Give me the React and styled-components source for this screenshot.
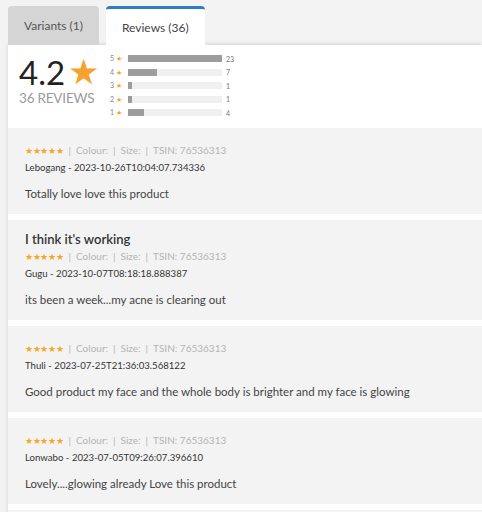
import React from "react"
import styled, { createGlobalStyle } from "styled-components"

const reviews = [
	{
		name: "Lebogang",
		date: "2023-10-26T10:04:07.734336",
		body: "Totally love love this product",
	},
	{
		title: "I think it's working",
		name: "Gugu",
		date: "2023-10-07T08:18:18.888387",
		body: "its been a week...my acne is clearing out",
	},
	{
		name: "Thuli",
		date: "2023-07-25T21:36:03.568122",
		body: "Good product my face and the whole body is brighter and my face is glowing",
	},
	{
		name: "Lonwabo",
		date: "2023-07-05T09:26:07.396610",
		body: "Lovely....glowing already Love this product",
	},
]

const distribution = [
	{ stars: 5, count: 23 },
	{ stars: 4, count: 7 },
	{ stars: 3, count: 1 },
	{ stars: 2, count: 1 },
	{ stars: 1, count: 4 },
]

export default function App() {
	const max = Math.max(...distribution.map((d) => d.count))

	return (
		<>
			<GlobalStyle />
			<Page>
				<Tabs>
					<Tab>Variants (1)</Tab>
					<Tab active>Reviews (36)</Tab>
				</Tabs>
				<Panel>
					<Summary>
						<Score>
							<Average>
								4.2 <BigStar>★</BigStar>
							</Average>
							<Total>36 Reviews</Total>
						</Score>
						<Chart>
							{distribution.map((d) => (
								<ChartRow key={d.stars}>
									<ChartLabel>
										{d.stars} <Orange>★</Orange>
									</ChartLabel>
									<Track>
										<Fill style={{ width: `${(d.count / max) * 100}%` }} />
									</Track>
									<ChartCount>{d.count}</ChartCount>
								</ChartRow>
							))}
						</Chart>
					</Summary>

					{reviews.map((r, i) => (
						<Card key={i}>
							{r.title && <Title>{r.title}</Title>}
							<Meta>
								<Stars>★★★★★</Stars>
								<Sep>|</Sep>Colour:<Sep>|</Sep>Size:<Sep>|</Sep>TSIN: 76536313
							</Meta>
							<Author>
								{r.name} - {r.date}
							</Author>
							<Body>{r.body}</Body>
						</Card>
					))}
					<Card />
				</Panel>
			</Page>
		</>
	)
}

const GlobalStyle = createGlobalStyle`
    html, body {
        margin: 0;
        padding: 0;
        background: #f3f3f3;
        font-family: Lato, "Open Sans", sans-serif;
        overflow: hidden;
    }
`

const Page = styled.div`
    padding-top: 6px;
    min-height: 512px;
`

const Tabs = styled.div`
    display: flex;
    gap: 7px;
    padding-left: 8px;
    position: relative;
    z-index: 2;
`

const Tab = styled.div`
    box-sizing: border-box;
    height: ${(p) => (p.active ? "41px" : "39px")};
    margin-bottom: ${(p) => (p.active ? "-2px" : "0")};
    padding: 0 16px;
    display: flex;
    align-items: center;
    font-size: 12px;
    border-radius: 4px 4px 0 0;
    color: ${(p) => (p.active ? "#444" : "#555")};
    background: ${(p) => (p.active ? "#fff" : "#d5d5d5")};
    border-top: ${(p) => (p.active ? "3px solid #2c7cc6" : "none")};
    padding-bottom: ${(p) => (p.active ? "2px" : "0")};
`

const Panel = styled.div`
    margin-left: 8px;
    background: #fff;
    box-shadow: 0 -1px 4px rgba(0, 0, 0, 0.13);
    position: relative;
    z-index: 1;
`

const Summary = styled.div`
    display: flex;
    align-items: flex-start;
    height: 82px;
    padding: 0 0 0 11px;
    margin-bottom: 1px;
`

const Score = styled.div`
    width: 91px;
    padding-top: 9px;
`

const Average = styled.div`
    font-size: 33px;
    line-height: 36px;
    color: #222;
    display: flex;
    align-items: center;
    gap: 3px;
`

const BigStar = styled.span`
    color: #f7a12e;
    font-size: 35px;
    line-height: 36px;
    font-family: "DejaVu Sans", sans-serif;
`

const Total = styled.div`
    font-size: 13.5px;
    color: #9a9a9a;
    text-transform: uppercase;
    letter-spacing: -0.2px;
`

const Chart = styled.div`
    padding-top: 7px;
    display: flex;
    flex-direction: column;
`

const ChartRow = styled.div`
    display: flex;
    align-items: center;
    height: 13.5px;
`

const ChartLabel = styled.span`
    width: 18px;
    font-size: 7px;
    color: #888;
`

const Orange = styled.span`
    color: #f5a623;
`

const Track = styled.div`
    width: 94px;
    height: 7px;
    background: #f0f0f0;
`

const Fill = styled.div`
    height: 100%;
    background: #9d9d9d;
`

const ChartCount = styled.span`
    margin-left: 4px;
    font-size: 7px;
    color: #777;
`

const Card = styled.div`
    background: #f3f3f3;
    padding: 15px 17px 11px;
    margin-bottom: 6px;
    min-height: 20px;
`

const Title = styled.div`
    font-size: 13px;
    font-weight: 600;
    color: #333;
    line-height: 19px;
    margin-top: -5px;
`

const Meta = styled.div`
    font-size: 10px;
    line-height: 14px;
    height: 14px;
    color: #b3b3b3;
`

const Stars = styled.span`
    color: #f5a623;
    font-size: 8.5px;
    letter-spacing: -0.3px;
`

const Sep = styled.span`
    margin: 0 5px;
`

const Author = styled.div`
    margin-top: 4px;
    font-size: 9.6px;
    line-height: 14px;
    height: 14px;
    color: #333;
`

const Body = styled.div`
    margin-top: 10px;
    font-size: 11.5px;
    line-height: 18px;
    color: #444;
`
